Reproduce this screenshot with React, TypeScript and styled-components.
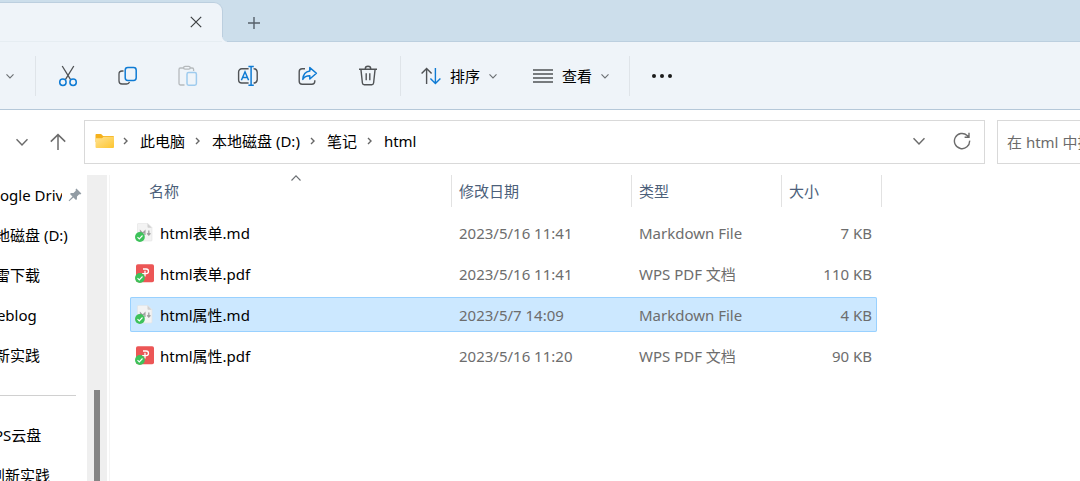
import React from 'react';
import styled, { createGlobalStyle, css } from 'styled-components';

const GlobalStyle = createGlobalStyle`
  * { box-sizing: border-box; }
  body {
    margin: 0;
    background: #ffffff;
    overflow: hidden;
    color: #000000;
    font: 15px/20px "Noto Sans", "Noto Sans CJK SC", sans-serif;
  }
  button, input {
    font: inherit;
    color: inherit;
    border: 0;
    padding: 0;
    margin: 0;
    background: none;
    border-radius: 0;
    outline: none;
  }
  svg { display: block; flex: none; }
`;

const Window = styled.div`
  display: flex;
  flex-direction: column;
  height: 100vh;
`;

/* ---------- tab strip ---------- */

const TabStrip = styled.header`
  display: flex;
  flex: none;
  align-items: flex-end;
  height: 42px;
  background: #ccdeeb;
  border-bottom: 1px solid #bccfdf;
`;

const Tab = styled.div`
  position: relative;
  display: flex;
  align-items: center;
  justify-content: flex-end;
  width: 223px;
  height: 40px;
  margin-bottom: -1px;
  padding-right: 14px;
  background: #eff4f9;
  border-top: 1px solid #bccfdf;
  border-right: 1px solid #bccfdf;
  border-bottom: 1px solid #e6edf2;
  border-top-right-radius: 9px;

  &::after {
    content: '';
    position: absolute;
    left: 100%;
    bottom: -1px;
    width: 5px;
    height: 5px;
    background: radial-gradient(circle at 100% 0, transparent 4px, #eff4f9 5px);
  }
`;

const StripButton = styled.button`
  display: grid;
  place-items: center;
  width: 24px;
  height: 24px;
`;

const NewTab = styled(StripButton)`
  margin: 0 0 6px 19px;
`;

/* ---------- toolbar ---------- */

const Toolbar = styled.div`
  display: flex;
  flex: none;
  align-items: center;
  height: 68px;
  background: #eff4f9;
  border-bottom: 1px solid #b5c8d9;
`;

const Divider = styled.span`
  width: 1px;
  height: 40px;
  margin: 0 2px;
  background: #dfe4e9;
`;

const ToolButton = styled.button<{ $width?: number }>`
  display: grid;
  place-items: center;
  width: ${(p) => p.$width ?? 60}px;
  height: 40px;
`;

const MenuButton = styled.button`
  display: flex;
  align-items: center;
  gap: 9px;
  height: 40px;
  padding: 0 18px;
`;

/* ---------- address row ---------- */

const AddressRow = styled.div`
  display: flex;
  flex: none;
  height: 65px;
  padding: 10px 0 11px;
`;

const Nav = styled.nav`
  display: flex;
  align-items: center;
  justify-content: flex-end;
  width: 84px;
  padding-right: 8px;
`;

const NavButton = styled.button`
  display: grid;
  place-items: center;
  width: 36px;
  height: 36px;
`;

const AddressBox = styled.div`
  display: flex;
  flex: 1;
  align-items: center;
  min-width: 0;
  padding: 0 1px 2px 10px;
  border: 1px solid #d9d9d9;
`;

const Crumbs = styled.ol`
  display: flex;
  flex: 1;
  align-items: center;
  margin: 0;
  padding: 0;
  list-style: none;
  white-space: nowrap;
`;

const Crumb = styled.li`
  display: flex;
  align-items: center;

  a { color: #000000; text-decoration: none; }
  svg { margin: 0 10px 0 8px; }
  & + & svg { margin-left: 9px; }
`;

const BoxButton = styled.button`
  display: grid;
  place-items: center;
  width: 43px;
  height: 40px;
`;

const Search = styled.input`
  width: 83px;
  margin-left: 12px;
  padding-left: 9px;
  border: 1px solid #d9d9d9;
  border-right: 0;

  &::placeholder { color: #6b6b6b; opacity: 1; }
`;

/* ---------- body ---------- */

const Body = styled.div`
  display: flex;
  flex: 1;
  min-height: 0;
`;

const Sidebar = styled.aside`
  display: flex;
  flex: none;
  width: 110px;
  overflow: hidden;
  border-right: 1px solid #f4f4f4;
`;

const Tree = styled.ul`
  flex: none;
  width: 107px;
  margin: 0 0 0 -20px;
  padding: 0;
  list-style: none;
`;

const TreeItem = styled.li<{ $level?: number }>`
  display: flex;
  align-items: center;
  gap: 6px;
  height: 40px;
  padding: 0 5px 0 ${(p) => (p.$level ?? 0) * 10}px;
  white-space: nowrap;

  a {
    flex: 1;
    overflow: hidden;
    color: #000000;
    text-decoration: none;
  }
`;

const TreeRule = styled.li`
  height: 40px;
  padding: 20px 11px 0 0;

  &::before {
    content: '';
    display: block;
    height: 1px;
    background: #d0d0d0;
  }
`;

const ScrollTrack = styled.div`
  display: flex;
  justify-content: center;
  width: 20px;
  padding-top: 215px;
  background: #efefef;
`;

const ScrollThumb = styled.div`
  width: 6px;
  background: #858585;
`;

const FilePane = styled.main`
  flex: 1;
  min-width: 0;
  padding-left: 20px;
`;

const FileTable = styled.table`
  display: block;

  thead, tbody { display: block; }
  tbody { padding-top: 8px; }
`;

const HeadRow = styled.tr`
  display: grid;
  grid-template-columns: 322px 180px 150px 100px;
  height: 32px;
`;

const HeadCell = styled.th<{ $inset?: boolean }>`
  position: relative;
  padding: 6px 0 6px ${(p) => (p.$inset ? 19 : 7)}px;
  border-right: 1px solid #e2e2e2;
  color: #4c607a;
  font-weight: 400;
  text-align: left;
`;

const SortMark = styled.span`
  position: absolute;
  top: -2px;
  left: 50%;
`;

const FileRow = styled.tr<{ $selected?: boolean }>`
  display: grid;
  grid-template-columns: 322px 180px 150px 95px;
  align-items: center;
  width: 747px;
  height: 35px;
  margin-bottom: 6px;
  border-radius: 2px;
  ${(p) =>
    p.$selected &&
    css`
      background: #cce8ff;
      box-shadow: inset 0 0 0 1px #99d1ff;
    `}
`;

const Cell = styled.td<{ $end?: boolean }>`
  padding: 0 5px 0 7px;
  color: #6d6d6d;
  text-align: ${(p) => (p.$end ? 'right' : 'left')};
`;

const NameCell = styled.td`
  display: flex;
  align-items: center;
  gap: 6px;
  padding: 0 0 0 5px;
`;

/* ---------- icons ---------- */

const INK = '#505356';
const BLUE = '#0f7bd4';

const Chevron = ({ w = 8, color = '#6b6f73', dir = 'down' }: { w?: number; color?: string; dir?: 'down' | 'up' }) => (
  <svg width={w} height={w} viewBox={`0 0 ${w} ${w}`} fill="none" stroke={color} strokeWidth={w > 10 ? 1.5 : 1.1}>
    <path d={dir === 'down' ? `M.5 ${w / 4 + 0.3}L${w / 2} ${w * 0.75}L${w - 0.5} ${w / 4 + 0.3}` : `M.5 ${w * 0.75}L${w / 2} ${w / 4 + 0.3}L${w - 0.5} ${w * 0.75}`} />
  </svg>
);

const CrumbChevron = () => (
  <svg width="8" height="10" viewBox="0 0 8 10" fill="none" stroke="#666" strokeWidth="1.4">
    <path d="M2 2L5 5L2 8" />
  </svg>
);

const icon = { width: 24, height: 24, viewBox: '0 0 24 24', fill: 'none', strokeWidth: 1.3 } as const;

const CutIcon = () => (
  <svg {...icon} stroke={INK}>
    <path d="M6.2 2L14.6 15.6M17.8 2L9.4 15.6" />
    <g stroke={BLUE} strokeWidth="1.5">
      <circle cx="6.9" cy="18.2" r="3.2" />
      <circle cx="17.1" cy="18.2" r="3.2" />
    </g>
  </svg>
);

const CopyIcon = () => (
  <svg {...icon} stroke={INK}>
    <path d="M7.5 7H6a3 3 0 0 0-3 3v7a3 3 0 0 0 3 3h4.5c1.5 0 2.6-.8 3-2" />
    <rect x="9.2" y="3.6" width="11" height="12.8" rx="2.6" stroke={BLUE} strokeWidth="1.5" />
  </svg>
);

const PasteIcon = () => (
  <svg {...icon} stroke="#b6babd">
    <path d="M8 4H4.4C3.6 4 3 4.6 3 5.4v14.2c0 .8.6 1.4 1.4 1.4H8.5M14 4h2.2c.8 0 1.4.6 1.4 1.4V7" />
    <rect x="7.6" y="2.4" width="6.6" height="2.8" rx="1.4" />
    <rect x="11" y="8.6" width="9.4" height="12.6" rx="1.6" stroke="#9fcbee" strokeWidth="1.5" />
  </svg>
);

const RenameIcon = () => (
  <svg {...icon} stroke={INK} strokeWidth="1.4">
    <path d="M12.6 19H5.8a3.2 3.2 0 0 1-3.2-3.2V8a3.2 3.2 0 0 1 3.2-3.2h6.8M17.6 4.8a3.6 3.6 0 0 1 3.6 3.2v7.8a3.6 3.6 0 0 1-3.6 3.2" />
    <g stroke={BLUE} strokeWidth="1.5">
      <path d="M5.4 16.2L9 7.8L12.6 16.2M6.6 13.4h4.8" />
      <path d="M12.4 2.6h5.4M12.4 21.2h5.4M15.1 2.6v18.6" />
    </g>
  </svg>
);

const ShareIcon = () => (
  <svg {...icon} stroke={INK} strokeWidth="1.4">
    <path d="M9 4.8H6.2a3 3 0 0 0-3 3v9.4a3 3 0 0 0 3 3h9.6a3 3 0 0 0 3-3v-1" />
    <path d="M13.8 3.6L20.4 9.2L13.8 15v-3.2c-3.4-.1-5.4 1-7 3.6c.3-4.8 2.6-7.8 7-8.4z" stroke={BLUE} strokeWidth="1.5" strokeLinejoin="round" />
  </svg>
);

const TrashIcon = () => (
  <svg {...icon} stroke={INK} strokeWidth="1.4">
    <path d="M3 5.2h18M9.2 5a2.8 2.8 0 0 1 5.6 0M4.9 5.2l1.5 13.8c.1 1 .8 1.7 1.8 1.7h7.6c1 0 1.7-.7 1.8-1.7l1.500-13.8M10.2 9.2v7M13.8 9.2v7" />
  </svg>
);

const SortIcon = () => (
  <svg width="20" height="18" viewBox="0 0 20 18" fill="none" strokeWidth="1.4">
    <path d="M5.6 17V1.4M.6 6.6L5.6 1.4L10.6 6.6" stroke={INK} />
    <path d="M14.4 1v15.6M9.4 11.4L14.4 16.6L19.4 11.4" stroke={BLUE} />
  </svg>
);

const ViewIcon = () => (
  <svg width="20" height="16" viewBox="0 0 20 16" fill="none" stroke={INK} strokeWidth="1.3">
    <path d="M0 2h20M0 6h20M0 10h20M0 14h20" />
  </svg>
);

const MoreIcon = () => (
  <svg width="20" height="6" viewBox="0 0 20 6" fill="#1b1b1b">
    <circle cx="2" cy="3" r="2" />
    <circle cx="10" cy="3" r="2" />
    <circle cx="18" cy="3" r="2" />
  </svg>
);

const CloseIcon = () => (
  <svg width="12" height="12" viewBox="0 0 12 12" stroke="#3c3f42" strokeWidth="1.2">
    <path d="M.8.8L11.2 11.2M11.2.8L.8 11.2" />
  </svg>
);

const PlusIcon = () => (
  <svg width="12" height="12" viewBox="0 0 12 12" stroke="#55606a" strokeWidth="1.4">
    <path d="M6 0v12M0 6h12" />
  </svg>
);

const UpIcon = () => (
  <svg width="16" height="18" viewBox="0 0 16 18" fill="none" stroke="#6b6b6b" strokeWidth="1.5">
    <path d="M8 17V1.6M.8 8.6L8 1.6L15.2 8.6" />
  </svg>
);

const RefreshIcon = () => (
  <svg width="18" height="18" viewBox="0 0 18 18" fill="none" stroke="#6b6b6b" strokeWidth="1.4">
    <path d="M16.6 8.6a7.6 7.6 0 1 1-2.4-5.1l1.6 1.5M16 .8v4.4h-4.4" />
  </svg>
);

const FolderIcon = () => (
  <svg width="19" height="16" viewBox="0 0 19 16">
    <defs>
      <linearGradient id="folder" x1="0" y1="0" x2="1" y2="1">
        <stop offset="0" stopColor="#ffe394" />
        <stop offset="1" stopColor="#fdc52f" />
      </linearGradient>
    </defs>
    <path d="M.5 2c0-.6.4-1 1-1h4.6l2 2H18a1 1 0 0 1 1 1v5H.5z" fill="#f5b11c" />
    <path d="M.5 5.2H7l1.6-1.4H19V14a1 1 0 0 1-1 1H1.5a1 1 0 0 1-1-1z" fill="url(#folder)" />
  </svg>
);

const PinIcon = () => (
  <svg width="14" height="14" viewBox="0 0 14 14" fill="#929ca4">
    <path d="M8.4.6L13.4 5.6L12.2 6.4L11.2 6.2L9 8.6L8.9 11.2L8 12L5.4 9.5L1.3 13.3L.6 12.6L4.5 8.6L2 6L2.9 5.1L5.5 5L7.8 2.8L7.6 1.5z" />
  </svg>
);

const SyncBadge = () => (
  <g>
    <circle cx="4.9" cy="14" r="4.9" fill="#3dc25a" />
    <path d="M2.5 14.1L4.3 15.9L7.5 12.5" fill="none" stroke="#fff" strokeWidth="1.1" />
  </g>
);

const MarkdownIcon = () => (
  <svg width="19" height="19" viewBox="0 0 19 19">
    <path d="M2.5 1.2c0-.5.3-.8.8-.8h9.500l4.200 4.200v12.600c0 .5-.3.8-.8.8H3.300c-.5 0-.8-.3-.8-.8z" fill="#f3f3f3" stroke="#e2e2e2" strokeWidth=".6" />
    <path d="M12.500.5v3.400c0 .5.3.8.8.8h3.500z" fill="#d0d0d0" />
    <path d="M5.500 12V8L7.700 10.300L9.900 8v4M13.800 7.500v4.500M12.200 10.200l1.600 1.800l1.600-1.800" fill="none" stroke="#a0a0a0" strokeWidth="1.300" />
    <SyncBadge />
  </svg>
);

const PdfIcon = () => (
  <svg width="19" height="19" viewBox="0 0 19 19">
    <rect x="1" y=".3" width="18" height="18" rx="1.8" fill="#ec5656" />
    <path d="M8 5h3.200a2.300 2.300 0 0 1 0 4.600H7M10 6.800v5.600" fill="none" stroke="#fff" strokeWidth="1.300" />
    <SyncBadge />
  </svg>
);

/* ---------- data ---------- */

const tools = [
  { label: '剪切', Icon: CutIcon },
  { label: '复制', Icon: CopyIcon },
  { label: '粘贴', Icon: PasteIcon },
  { label: '重命名', Icon: RenameIcon },
  { label: '共享', Icon: ShareIcon },
  { label: '删除', Icon: TrashIcon },
];

const crumbs = ['此电脑', '本地磁盘 (D:)', '笔记', 'html'];

const files = [
  { name: 'html表单.md', date: '2023/5/16 11:41', type: 'Markdown File', size: '7 KB' },
  { name: 'html表单.pdf', date: '2023/5/16 11:41', type: 'WPS PDF 文档', size: '110 KB' },
  { name: 'html属性.md', date: '2023/5/7 14:09', type: 'Markdown File', size: '4 KB', selected: true },
  { name: 'html属性.pdf', date: '2023/5/16 11:20', type: 'WPS PDF 文档', size: '90 KB' },
];

export default function App() {
  return (
    <Window>
      <GlobalStyle />
      <TabStrip>
        <Tab>
          <StripButton aria-label="关闭标签页"><CloseIcon /></StripButton>
        </Tab>
        <NewTab aria-label="新建标签页"><PlusIcon /></NewTab>
      </TabStrip>

      <Toolbar role="toolbar">
        <ToolButton $width={20} aria-label="新建"><Chevron /></ToolButton>
        <ToolButton $width={13} aria-hidden="true" tabIndex={-1} />
        <Divider />
        {tools.map(({ label, Icon }) => (
          <ToolButton key={label} aria-label={label} disabled={label === '粘贴'}><Icon /></ToolButton>
        ))}
        <Divider />
        <MenuButton><SortIcon />排序<Chevron /></MenuButton>
        <MenuButton><ViewIcon />查看<Chevron /></MenuButton>
        <Divider />
        <ToolButton aria-label="更多"><MoreIcon /></ToolButton>
      </Toolbar>

      <AddressRow>
        <Nav>
          <NavButton aria-label="最近位置"><Chevron w={12} color="#6b6b6b" /></NavButton>
          <NavButton aria-label="向上"><UpIcon /></NavButton>
        </Nav>
        <AddressBox>
          <FolderIcon />
          <Crumbs>
            {crumbs.map((c) => (
              <Crumb key={c}><CrumbChevron /><a href="#">{c}</a></Crumb>
            ))}
          </Crumbs>
          <BoxButton aria-label="历史记录"><Chevron w={12} color="#6b6b6b" /></BoxButton>
          <BoxButton aria-label="刷新"><RefreshIcon /></BoxButton>
        </AddressBox>
        <Search type="text" aria-label="搜索" placeholder="在 html 中搜索" />
      </AddressRow>

      <Body>
        <Sidebar>
          <Tree>
            <TreeItem><a href="#">Google Drive</a><PinIcon /></TreeItem>
            <TreeItem><a href="#">本地磁盘 (D:)</a></TreeItem>
            <TreeItem><a href="#">迅雷下载</a></TreeItem>
            <TreeItem><a href="#">vueblog</a></TreeItem>
            <TreeItem><a href="#">创新实践</a></TreeItem>
            <TreeRule role="separator" />
            <TreeItem><a href="#">WPS云盘</a></TreeItem>
            <TreeItem $level={1}><a href="#">创新实践</a></TreeItem>
          </Tree>
          <ScrollTrack><ScrollThumb /></ScrollTrack>
        </Sidebar>
        <FilePane>
          <FileTable cellSpacing={0}>
            <thead>
              <HeadRow>
                <HeadCell $inset>名称<SortMark><Chevron w={10} dir="up" /></SortMark></HeadCell>
                <HeadCell>修改日期</HeadCell>
                <HeadCell>类型</HeadCell>
                <HeadCell>大小</HeadCell>
              </HeadRow>
            </thead>
            <tbody>
              {files.map((f) => (
                <FileRow key={f.name} $selected={f.selected}>
                  <NameCell>{f.name.endsWith('.md') ? <MarkdownIcon /> : <PdfIcon />}{f.name}</NameCell>
                  <Cell>{f.date}</Cell>
                  <Cell>{f.type}</Cell>
                  <Cell $end>{f.size}</Cell>
                </FileRow>
              ))}
            </tbody>
          </FileTable>
        </FilePane>
      </Body>
    </Window>
  );
}
